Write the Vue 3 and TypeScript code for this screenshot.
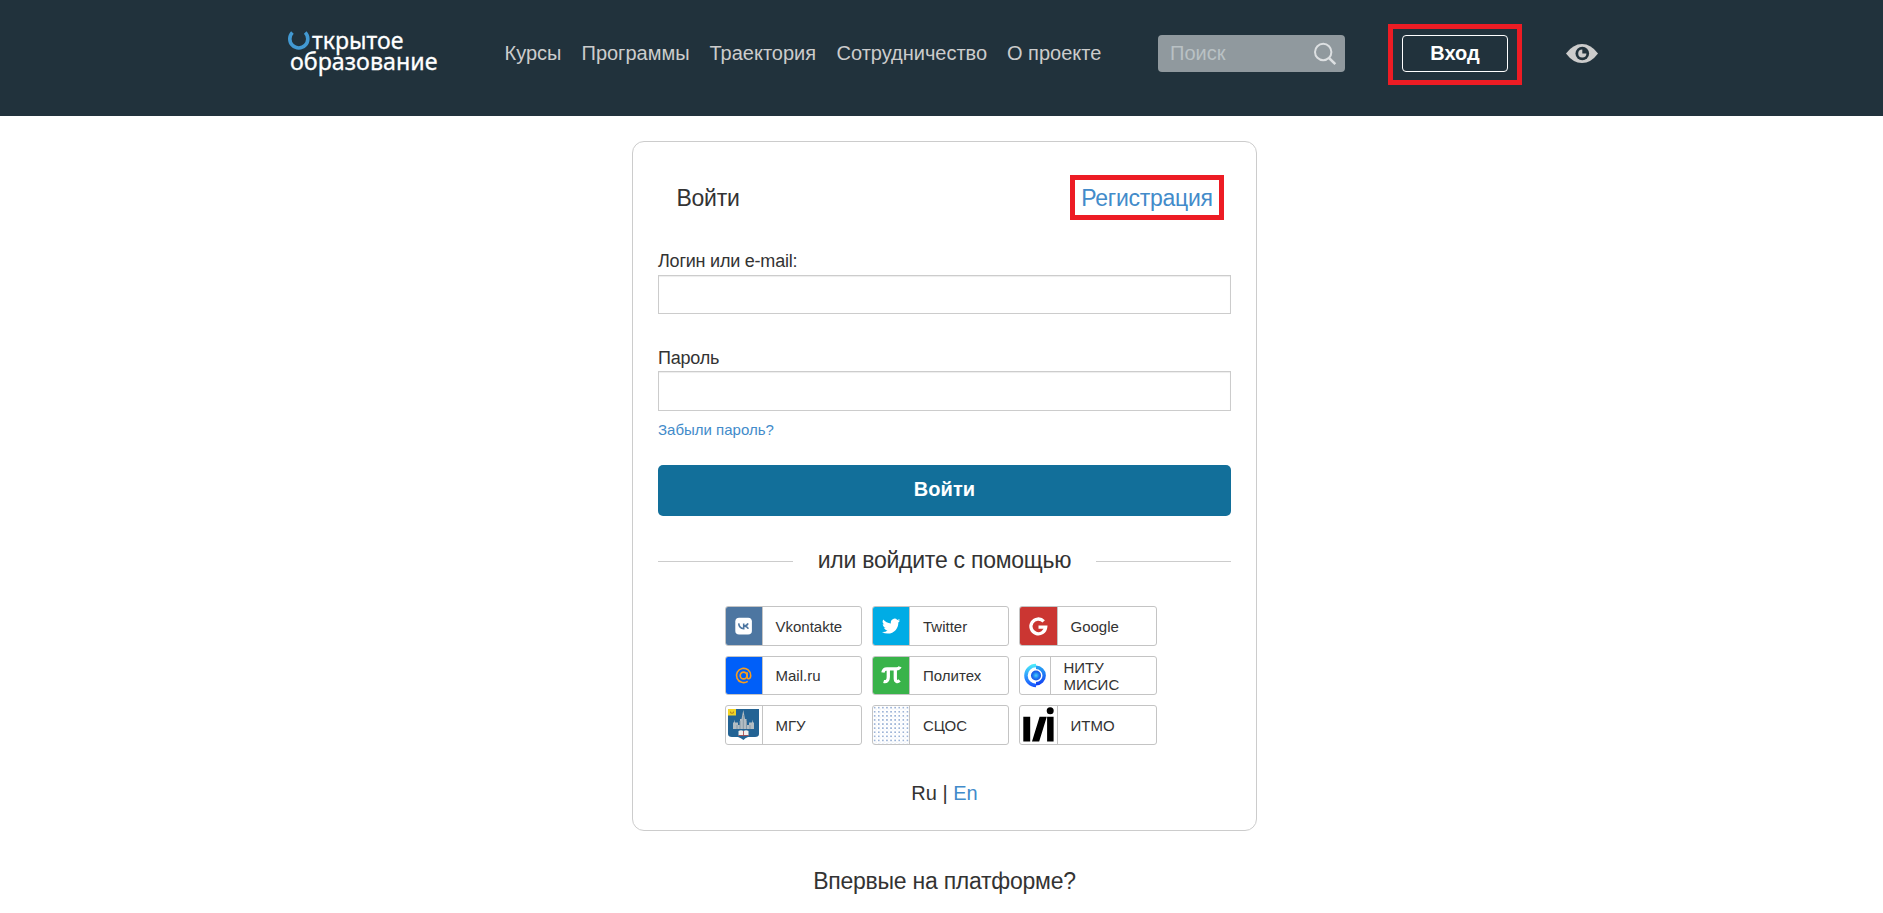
<script setup lang="ts">
import { ref } from 'vue'

interface NavItem { label: string; width: number }
interface Provider { id: string; label: string }

const nav: NavItem[] = [
  { label: 'Курсы', width: 77 },
  { label: 'Программы', width: 128 },
  { label: 'Траектория', width: 127 },
  { label: 'Сотрудничество', width: 170.5 },
  { label: 'О проекте', width: 96 },
]
const providers: Provider[] = [
  { id: 'vk', label: 'Vkontakte' },
  { id: 'twitter', label: 'Twitter' },
  { id: 'google', label: 'Google' },
  { id: 'mail', label: 'Mail.ru' },
  { id: 'polytech', label: 'Политех' },
  { id: 'misis', label: 'НИТУ МИСИС' },
  { id: 'msu', label: 'МГУ' },
  { id: 'scos', label: 'СЦОС' },
  { id: 'itmo', label: 'ИТМО' },
]
const login = ref('')
const password = ref('')
const query = ref('')
</script>

<template>
  <div class="page">
    <header class="header">
      <a class="logo" aria-label="Открытое образование">
        <svg width="152" height="50" viewBox="0 0 152 50">
          <path d="M4.4 1.6A9 9 0 1 0 17.2 1.6" fill="none" stroke="#4299d2" stroke-width="3.6" />
          <text x="24" y="18.1" class="logo-text" textLength="91.5" lengthAdjust="spacingAndGlyphs">ткрытое</text>
          <text x="2" y="39.2" class="logo-text" textLength="147.5" lengthAdjust="spacingAndGlyphs">образование</text>
        </svg>
      </a>
      <nav class="nav">
        <a v-for="n in nav" :key="n.label" :style="{ width: n.width + 'px' }">{{ n.label }}</a>
      </nav>
      <label class="search">
        <input v-model="query" placeholder="Поиск" />
        <svg width="24" height="24" viewBox="0 0 24 24" fill="none" stroke="#dde0e2">
          <circle cx="10.2" cy="10" r="8.2" stroke-width="2" />
          <path d="M16 16l6.3 6.2" stroke-width="2.5" />
        </svg>
      </label>
      <div class="mark mark-login"><button class="enter">Вход</button></div>
      <svg class="eye" width="32" height="19" viewBox="0 0 32 19">
        <path d="M0 9.5Q7 0 16 0T32 9.5Q25 19 16 19T0 9.5Z" fill="#ccc" />
        <circle cx="16.3" cy="9.5" r="6.8" fill="#21323c" />
        <path d="M16.3 5.4A4.1 4.1 0 1 0 20.4 9.5H16.3Z" fill="#ccc" />
      </svg>
    </header>

    <main class="card">
      <div class="tabs">
        <span>Войти</span>
        <a class="mark mark-reg">Регистрация</a>
      </div>
      <label class="field">
        <span>Логин или e-mail:</span>
        <input v-model="login" type="text" />
      </label>
      <label class="field field-pass">
        <span>Пароль</span>
        <input v-model="password" type="password" />
      </label>
      <a class="forgot">Забыли пароль?</a>
      <button class="submit">Войти</button>
      <div class="divider"><span>или войдите с помощью</span></div>
      <div class="providers">
        <a v-for="p in providers" :key="p.id" class="provider" :class="p.id">
          <span class="icon">
            <svg v-if="p.id === 'vk'" width="36" height="38" viewBox="0 0 36 38">
              <rect x="9.3" y="10.7" width="16.6" height="16.8" rx="3.8" fill="#fff" />
              <path d="M12.7 16.4C13 19.7 14.5 21.5 17.7 21.600V16.4M22 16.4C21.4 18 20.2 18.8 18 19C20.2 19.2 21.6 20.2 22.3 21.8" fill="none" stroke="#4d76a1" stroke-width="1.6" />
            </svg>
            <svg v-else-if="p.id === 'twitter'" width="36" height="38" viewBox="0 0 36 38">
              <path transform="translate(9.2 10) scale(.76)" fill="#fff" d="M23.6 4.6c-.9.4-1.8.6-2.8.8 1-.6 1.8-1.6 2.2-2.7-1 .6-2 1-3.1 1.2a4.9 4.9 0 0 0-8.4 4.5C7.4 8.2 3.8 6.2 1.4 3.2a4.9 4.9 0 0 0 1.5 6.6c-.8 0-1.6-.2-2.2-.6v.1c0 2.4 1.7 4.4 3.9 4.8-.7.2-1.5.2-2.2.1.6 2 2.4 3.4 4.6 3.4A9.9 9.9 0 0 1-.3 19.6a13.9 13.9 0 0 0 7.5 2.2c9.1 0 14-7.5 14-14v-.6c1-.7 1.8-1.6 2.4-2.6z" />
            </svg>
            <svg v-else-if="p.id === 'google'" width="37" height="38" viewBox="0 0 37 38">
              <path d="M23.7 14.3A7.4 7.4 0 1 0 25.7 20.1H18.5" fill="none" stroke="#fff" stroke-width="3.3" />
            </svg>
            <svg v-else-if="p.id === 'mail'" width="36" height="37" viewBox="0 0 36 37">
              <circle cx="17.6" cy="18.5" r="3.4" fill="none" stroke="#f99d1b" stroke-width="1.7" />
              <path d="M21.1 15.2V19.7C21.1 22.7 24.7 22.5 24.7 18.5A7.1 7.1 0 1 0 21.7 24.3" fill="none" stroke="#f99d1b" stroke-width="1.6" />
            </svg>
            <svg v-else-if="p.id === 'polytech'" width="36" height="37" viewBox="0 0 36 37">
              <path d="M9.9 15.5C10.3 12.5 11.8 11.8 14 11.8L23.5 11.8C25.5 11.8 26.5 11.2 27 9.8M15.3 12V20C15.3 23.6 13.5 25.3 10.6 24.5M22.3 12V21.5C22.3 24.8 24.5 25.4 26.6 23.4" fill="none" stroke="#fff" stroke-width="3.3" />
            </svg>
            <svg v-else-if="p.id === 'misis'" width="30" height="37" viewBox="0 0 30 37">
              <defs>
                <linearGradient id="ring" x1="0" y1="0" x2="0" y2="1"><stop offset="0" stop-color="#4df0fa" /><stop offset="1" stop-color="#154eff" /></linearGradient>
                <linearGradient id="half" x1="0" y1="0" x2="0" y2="1"><stop offset="0" stop-color="#29a8f5" /><stop offset="1" stop-color="#123cf2" /></linearGradient>
                <radialGradient id="core"><stop offset="0" stop-color="#4bd0fb" /><stop offset=".6" stop-color="#1f78f0" /><stop offset="1" stop-color="#1751e7" /></radialGradient>
              </defs>
              <path d="M16 6.7V10.2A8.3 8.3 0 0 0 16 26.8V30.3A11.8 11.8 0 0 1 16 6.7Z" fill="url(#ring)" />
              <path d="M16 8.6A9.9 9.9 0 0 1 16 28.4V25A6.5 6.5 0 0 0 16 12Z" fill="url(#half)" />
              <circle cx="16" cy="18.5" r="5" fill="url(#core)" />
            </svg>
            <svg v-else-if="p.id === 'msu'" width="36" height="38" viewBox="0 0 36 38">
              <path d="M2 3H33V28Q33 31 29 31H22Q19 32 17.5 34Q15 32 12 31H6Q2 31 2 28Z" fill="#236394" />
              <path d="M2 3H10V9.5H2Z" fill="#f1d326" />
              <path d="M4 5l2 2 2-2v2L6 8 4 7Z" fill="#b98a20" />
              <path d="M7 23V16.500H8L8.500 13.5L9 16.5H12V19H14V13H15.5L17.3 4L19 13H20.5V19H23V16.5H26L26.5 13.5L27 16.5H28V23Z" fill="#b3bdc3" />
              <path d="M11 19V23M14 15V23M17.3 9V23M20.5 15V23M24 19V23" stroke="#8799a6" stroke-width="1" />
              <path d="M12.5 25Q15 23.5 17.5 25Q20 23.5 22.5 25V29.5H12.5Z" fill="#f3f0ee" />
              <path d="M17.5 25V29.5M12.5 29.5H22.5" stroke="#9e3d43" stroke-width=".8" />
            </svg>
            <svg v-else-if="p.id === 'scos'" width="36" height="38" viewBox="0 0 36 38">
              <defs>
                <pattern id="dots" width="4.1" height="4.1" patternUnits="userSpaceOnUse">
                  <rect x="1" y="1" width="1.3" height="1.3" fill="#6388c0" /><rect x="3" y="3" width=".7" height=".7" fill="#bac9e1" />
                </pattern>
              </defs>
              <rect width="36" height="38" fill="url(#dots)" />
            </svg>
            <svg v-else width="37" height="38" viewBox="0 0 37 38">
              <path d="M3.3 10.7H10.2V35.5H3.3ZM19.6 10.7H26.8L19.2 35.5H12ZM27.1 10.7H33.6V35.5H27.1Z" fill="#000" />
              <circle cx="30.2" cy="4.7" r="3.5" fill="#000" />
            </svg>
          </span>
          <span class="name">{{ p.label }}</span>
        </a>
      </div>
      <div class="lang">Ru | <a>En</a></div>
    </main>
    <h2 class="first">Впервые на платформе?</h2>
  </div>
</template>

<style>
html, body { margin: 0; background: #fff; overflow: hidden; }
</style>

<style scoped>
* { box-sizing: border-box; }
.page { width: 1883px; height: 913px; overflow: hidden; background: #fff; color: #333; font-family: "Liberation Sans", Arial, sans-serif; }
button, input { font-family: inherit; margin: 0; }
a { color: #428bca; text-decoration: none; }
.header { display: flex; align-items: flex-start; height: 116px; padding-left: 287.5px; background: #21323c; }
.logo { width: 217px; padding-top: 31px; flex: none; }
.logo svg { display: block; overflow: visible; }
.logo-text { font-family: "Noto Sans", "Open Sans", sans-serif; font-size: 23px; fill: #fff; stroke: #fff; stroke-width: .3px; }
.nav { display: flex; width: 653.5px; flex: none; padding-top: 38px; font-size: 20px; line-height: 30px; }
.nav a { flex: none; color: #ccc; white-space: nowrap; }
.search { display: flex; align-items: center; width: 187px; height: 37px; margin-top: 35px; padding: 0 8px 0 12px; border-radius: 4px; background: #90999e; flex: none; }
.search input { flex: 1; min-width: 0; height: 30px; padding: 0; border: 0; background: none; font-size: 20px; color: #fff; outline: none; }
.search input::placeholder { color: #b9c1c4; opacity: 1; }
.mark { border: 5px solid #ed1c24; }
.mark-login { width: 134px; height: 61px; margin: 24px 0 0 43px; padding: 6px 9px; flex: none; }
.enter { display: block; width: 106px; height: 37px; padding: 0 0 1px; border: 1px solid #fff; border-radius: 4px; background: none; color: #fff; font-size: 20px; font-weight: bold; }
.eye { margin: 44px 0 0 44px; flex: none; }
.card { width: 625px; height: 690px; margin: 25px 0 0 632px; padding: 33px 25px 0; border: 1px solid #ccc; border-radius: 12px; }
.tabs { display: flex; justify-content: space-between; align-items: center; height: 45px; padding: 0 7px 0 18.5px; font-size: 23px; letter-spacing: -.27px; line-height: 37px; }
.mark-reg { width: 154px; height: 45px; text-align: center; white-space: nowrap; }
.tabs span { padding-top: 2px; }
.field { display: block; margin-top: 27px; font-size: 18px; letter-spacing: -.22px; }
.field span { display: block; height: 28px; line-height: 28px; }
.field input { display: block; width: 573px; height: 39px; border: 1px solid #ccc; padding: 6px 12px; font-size: 18px; box-shadow: inset 0 1px 1px rgba(0, 0, 0, .075); outline: none; }
.field-pass { margin-top: 30px; }
.field-pass span { height: 27px; line-height: 29px; }
.field-pass input { height: 40px; }
.forgot { display: block; margin-top: 9px; height: 20px; font-size: 15px; line-height: 20px; }
.submit { display: block; width: 573px; height: 51px; margin-top: 25px; padding: 0 0 3px; border: 0; border-radius: 5px; background: #126f9a; color: #fff; font-size: 20px; font-weight: bold; letter-spacing: .1px; }
.divider { display: flex; align-items: center; height: 30px; margin-top: 29px; font-size: 23px; letter-spacing: -.25px; line-height: 30px; white-space: nowrap; }
.divider span { width: 303px; text-align: center; }
.divider::before, .divider::after { content: ""; width: 135px; height: 1px; margin-top: 3px; background: #ccc; }
.providers { display: grid; grid-template-columns: 137px 137px 138px; grid-template-rows: 40px 39px 40px; gap: 10px; margin: 31px 0 0 67px; }
.provider { display: flex; border: 1px solid #c4c4c4; border-radius: 3px; color: #333; font-size: 15px; line-height: 17px; overflow: hidden; }
.icon { width: 37px; flex: none; border-right: 1px solid #c4c4c4; }
.google .icon, .itmo .icon { width: 38px; }
.misis .icon { width: 31px; }
.icon svg { display: block; }
.name { align-self: center; padding-left: 12.5px; }
.twitter .name, .polytech .name, .scos .name { padding-left: 13px; }
.misis .name { width: 80px; }
.vk .icon { background: #4d76a1; }
.twitter .icon { background: #00ace5; }
.google .icon { background: #cb3632; }
.mail .icon { background: #005ff9; }
.polytech .icon { background: #39b34a; }
.lang { margin-top: 33px; text-align: center; font-size: 20px; line-height: 30px; }
.first { margin: 35px 0 0; padding-left: 6px; text-align: center; font-size: 23px; letter-spacing: -.25px; line-height: 30px; font-weight: normal; }
</style>
